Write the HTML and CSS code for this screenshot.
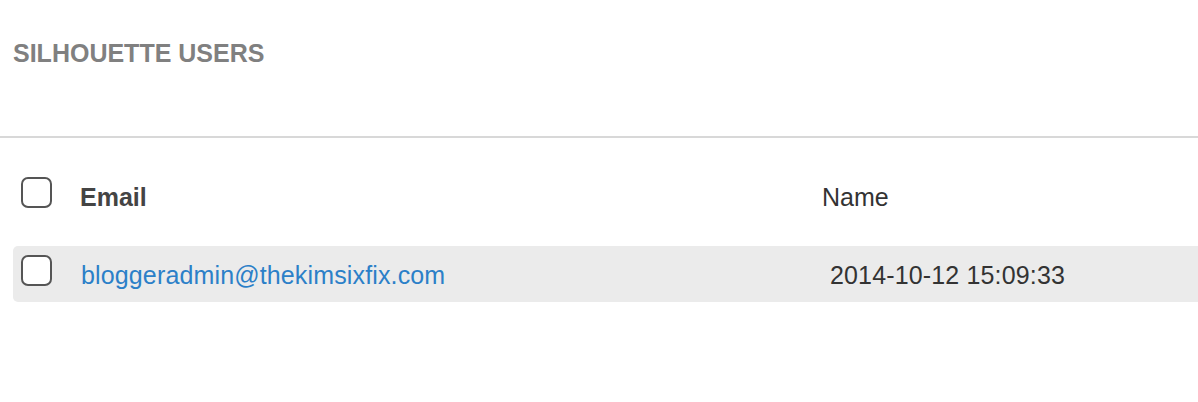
FILE: index.html
```html
<!DOCTYPE html>
<html>
<head>
<meta charset="utf-8">
<link rel="stylesheet" href="styles.css">
</head>
<body>
<div class="header">
  <h1 class="title">SILHOUETTE USERS</h1>
</div>
<div class="table">
  <div class="row head">
    <span class="check"></span>
    <span class="cell email">Email</span>
    <span class="cell name">Name</span>
  </div>
  <div class="row data">
    <span class="check"></span>
    <span class="cell email"><a class="link" href="#">bloggeradmin@thekimsixfix.com</a></span>
    <span class="cell name date">2014-10-12 15:09:33</span>
  </div>
</div>
</body>
</html>
```
FILE: styles.css
```css
html, body {
  margin: 0;
  padding: 0;
  background: #ffffff;
  overflow: hidden;
}
body {
  font-family: "Liberation Sans", Arial, sans-serif;
  width: 1198px;
  height: 402px;
}
.header {
  border-bottom: 2px solid #d8d8d8;
  padding-left: 13px;
  box-sizing: border-box;
  height: 138px;
}
.title {
  margin: 0;
  padding-top: 38px;
  font-size: 25px;
  line-height: 30px;
  font-weight: bold;
  color: #808080;
}
.table {
  padding-left: 13px;
}
.row {
  display: flex;
  align-items: flex-start;
  padding-left: 8px;
}
.check {
  display: block;
  width: 31px;
  height: 31px;
  box-sizing: border-box;
  border: 2px solid #555555;
  border-radius: 7px;
  background: #ffffff;
  flex: none;
}
.cell {
  font-size: 25px;
  line-height: 30px;
  display: block;
}
.email {
  margin-left: 28px;
  width: 742px;
  flex: none;
}
.head {
  margin-top: 32px;
  height: 46px;
  padding-top: 7px;
  box-sizing: border-box;
}
.head .cell {
  margin-top: 5px;
}
.head .email {
  font-weight: bold;
  color: #444444;
}
.head .name {
  color: #333333;
}
.data {
  margin-top: 30px;
  height: 56px;
  padding-top: 9px;
  box-sizing: border-box;
  background: #ebebeb;
  border-radius: 5px 0 0 5px;
}
.data .cell {
  margin-top: 5px;
}
.link {
  color: #2b80c8;
  text-decoration: none;
  padding-left: 1px;
  letter-spacing: 0.14px;
}
.date {
  padding-left: 8px;
  color: #333333;
  letter-spacing: 0.15px;
}
```
